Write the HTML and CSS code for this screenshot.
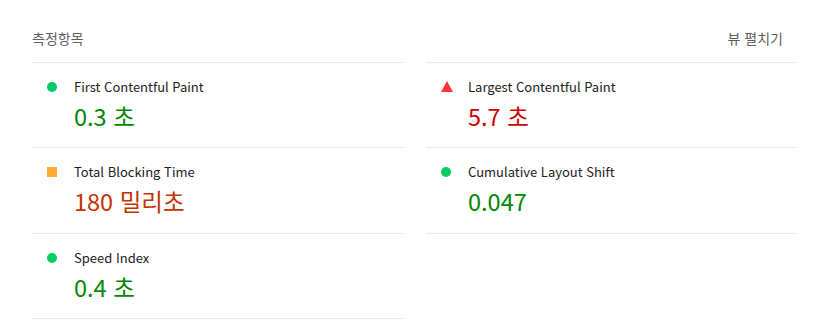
FILE: index.html
```html
<!DOCTYPE html>
<html lang="ko">
<head>
    <meta charset="UTF-8">
    <title>측정항목</title>
    <link rel="stylesheet" href="styles.css">
</head>
<body>
    <div class="metrics">
        <div class="metrics-header">
            <span class="metrics-title">측정항목</span>
            <span class="metrics-toggle">뷰 펼치기</span>
        </div>
        <div class="metrics-grid">
            <div class="metric pass">
                <span class="metric-icon"></span>
                <div class="metric-body">
                    <div class="metric-label">First Contentful Paint</div>
                    <div class="metric-value">0.3 초</div>
                </div>
            </div>
            <div class="metric fail">
                <span class="metric-icon"></span>
                <div class="metric-body">
                    <div class="metric-label">Largest Contentful Paint</div>
                    <div class="metric-value">5.7 초</div>
                </div>
            </div>
            <div class="metric average">
                <span class="metric-icon"></span>
                <div class="metric-body">
                    <div class="metric-label">Total Blocking Time</div>
                    <div class="metric-value">180 밀리초</div>
                </div>
            </div>
            <div class="metric pass">
                <span class="metric-icon"></span>
                <div class="metric-body">
                    <div class="metric-label">Cumulative Layout Shift</div>
                    <div class="metric-value">0.047</div>
                </div>
            </div>
            <div class="metric pass">
                <span class="metric-icon"></span>
                <div class="metric-body">
                    <div class="metric-label">Speed Index</div>
                    <div class="metric-value">0.4 초</div>
                </div>
            </div>
        </div>
    </div>
</body>
</html>
```

FILE: styles.css
```css
body {
    margin: 0;
    background: #fff;
    font-family: "Noto Sans CJK KR", "Noto Sans", sans-serif;
    color: #212121;
}
.metrics {
    width: 765px;
    padding: 28px 0 0 32px;
}
.metrics-header {
    display: flex;
    justify-content: space-between;
    align-items: center;
    height: 20px;
    margin-bottom: 14px;
    padding-right: 14px;
    font-size: 14px;
    color: #5f5f5f;
}
.metrics-grid {
    display: grid;
    grid-template-columns: 372px 371px;
    column-gap: 22px;
}
.metric {
    display: flex;
    padding: 14px 0 16.3px 15px;
    border-bottom: 1px solid #ebebeb;
}
.metric:nth-child(1),
.metric:nth-child(2) {
    border-top: 1px solid #ebebeb;
}
.metric-icon {
    width: 10px;
    height: 10px;
    margin-top: 5px;
    margin-right: 17px;
    flex: none;
}
.pass .metric-icon {
    background: #0c6;
    border-radius: 50%;
}
.average .metric-icon {
    background: #fa3;
}
.fail .metric-icon {
    width: 0;
    height: 0;
    border-left: 6px solid transparent;
    border-right: 6px solid transparent;
    border-bottom: 11px solid #f33;
    margin-top: 4px;
    margin-right: 15px;
}
.metric-label {
    font-size: 13px;
    line-height: 20px;
}
.metric-value {
    font-size: 23.5px;
    line-height: 30px;
    margin-top: 4px;
}
.pass .metric-value { color: #080; }
.average .metric-value { color: #c33300; }
.fail .metric-value { color: #c00; }
```
